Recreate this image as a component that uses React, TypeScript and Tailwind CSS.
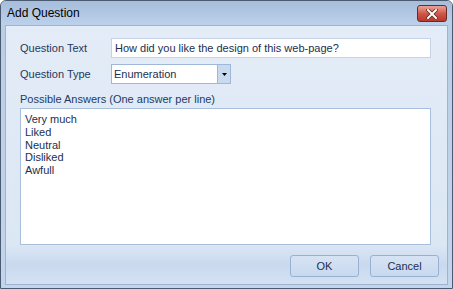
import React from "react";

export default function App() {
  const font = { fontFamily: '"Liberation Sans", Arial, sans-serif' };
  return (
    <div
      className="w-[453px] h-[289px] flex flex-col border border-[#4a5a70] bg-gradient-to-b from-[#b9cde6] to-[#c3d5ec] rounded-t-[6px] overflow-hidden"
      style={font}
    >
      {/* Title bar */}
      <div className="h-[24px] flex items-center justify-between pl-[6px] pr-[5px] bg-gradient-to-b from-[#a6bddb] to-[#bcd1eb]">
        <span className="text-[12px] text-black leading-none">Add Question</span>
        <div className="w-[30px] h-[17px] mt-[1px] rounded-[3px] border border-[#6b2a22] bg-gradient-to-b from-[#e9a398] via-[#d0574a] to-[#b8392c] flex items-center justify-center">
          <svg width="12" height="10" viewBox="0 0 12 10">
            <path d="M2 1 L10 9 M10 1 L2 9" stroke="#5a2018" strokeWidth="3.4" strokeLinecap="square" />
            <path d="M2 1 L10 9 M10 1 L2 9" stroke="#ffffff" strokeWidth="2" strokeLinecap="square" />
          </svg>
        </div>
      </div>
      {/* Client */}
      <div className="flex-1 mx-[4px] mb-[3px] border border-[#9db3cf] flex flex-col bg-gradient-to-b from-[#e3ecf7] to-[#dbe6f4]">
        <div className="flex-1 flex flex-col pl-[14px] pr-[16px] pt-[12px]">
          <div className="flex items-center h-[20px]">
            <span className="w-[91px] text-[11px] text-[#1e3a60]">Question Text</span>
            <div className="flex-1 h-[20px] bg-white border border-[#c5d3e4] flex items-center pl-[3px] text-[11px] text-[#1a2f50]">
              How did you like the design of this web-page?
            </div>
          </div>
          <div className="flex items-center h-[20px] mt-[6px]">
            <span className="w-[91px] text-[11px] text-[#1e3a60]">Question Type</span>
            <div className="w-[120px] h-[20px] bg-white border border-[#9fb8da] flex items-center text-[11px] text-[#1a2f50]">
              <span className="flex-1 pl-[2px]">Enumeration</span>
              <div className="w-[13px] h-full bg-[#c9daef] border-l border-[#9fb8da] flex items-center justify-center">
                <svg width="5" height="3" viewBox="0 0 5 3">
                  <path d="M0 0 H5 L2.5 3 Z" fill="#000" />
                </svg>
              </div>
            </div>
          </div>
          <div className="text-[11px] text-[#1e3a60] mt-[9px] leading-[13px]">
            Possible Answers (One answer per line)
          </div>
          <div className="mt-[2px] h-[137px] bg-white border border-[#a8bfdc] pl-[4px] pt-[4px] text-[11px] leading-[12.75px] text-[#1a2f50]">
            <div>Very much</div>
            <div>Liked</div>
            <div>Neutral</div>
            <div>Disliked</div>
            <div>Awfull</div>
          </div>
        </div>
        <div className="h-[39px] flex items-center justify-end gap-[11px] pr-[8px] pt-[3px] bg-gradient-to-b from-[#dce7f5] via-[#c9d9ee] to-[#d3e1f2]">
          <div className="w-[69px] h-[22px] rounded-[3px] border border-[#98b1d3] bg-gradient-to-b from-[#d6e3f3] to-[#c8d9ef] flex items-center justify-center text-[11px] text-[#1a2f50]">
            OK
          </div>
          <div className="w-[69px] h-[22px] rounded-[3px] border border-[#98b1d3] bg-gradient-to-b from-[#d6e3f3] to-[#c8d9ef] flex items-center justify-center text-[11px] text-[#1a2f50]">
            Cancel
          </div>
        </div>
      </div>
    </div>
  );
}
